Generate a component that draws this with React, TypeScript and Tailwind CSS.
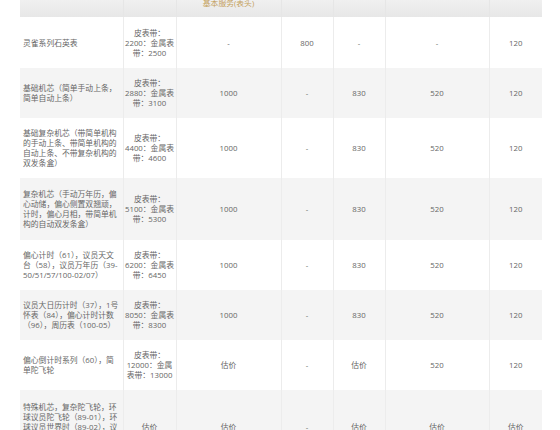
const 列宽 = [103, 53, 105, 52, 52, 104, 53]

interface 行 {
  名称: string[]
  表带: string[]
  值: string[]
  高: string
}

const 数据: 行[] = [
  {
    名称: ['灵雀系列石英表'],
    表带: ['皮表带：', '2200：金属表', '带：2500'],
    值: ['-', '800', '-', '-', '120'],
    高: 'h-[51px]',
  },
  {
    名称: ['基础机芯（简单手动上条，', '简单自动上条）'],
    表带: ['皮表带：', '2880：金属表', '带：3100'],
    值: ['1000', '-', '830', '520', '120'],
    高: 'h-[50px]',
  },
  {
    名称: ['基础复杂机芯（带简单机构', '的手动上条、带简单机构的', '自动上条、不带复杂机构的', '双发条盒）'],
    表带: ['皮表带：', '4400：金属表', '带：4600'],
    值: ['1000', '-', '830', '520', '120'],
    高: 'h-[60px]',
  },
  {
    名称: ['复杂机芯（手动万年历，偏', '心动储，偏心侧置双翘顽，', '计时，偏心月相，带简单机', '构的自动双发条盒）'],
    表带: ['皮表带：', '5100：金属表', '带：5300'],
    值: ['1000', '-', '830', '520', '120'],
    高: 'h-[62px]',
  },
  {
    名称: ['偏心计时（61），议员天文', '台（58），议员万年历（39-', '50/51/57/100-02/07）'],
    表带: ['皮表带：', '6200：金属表', '带：6450'],
    值: ['1000', '-', '830', '520', '120'],
    高: 'h-[50px]',
  },
  {
    名称: ['议员大日历计时（37），1号', '怀表（84），偏心计时计数', '（96），周历表（100-05）'],
    表带: ['皮表带：', '8050：金属表', '带：8300'],
    值: ['1000', '-', '830', '520', '120'],
    高: 'h-[50px]',
  },
  {
    名称: ['偏心倒计时系列（60），简', '单陀飞轮'],
    表带: ['皮表带：', '12000：金属', '表带：13000'],
    值: ['估价', '-', '估价', '520', '120'],
    高: 'h-[50px]',
  },
  {
    名称: ['特殊机芯，复杂陀飞轮，环', '球议员陀飞轮（89-01），环', '球议员世界时（89-02），议', '员万年历陀飞轮（94-11），', '议员三问报时'],
    表带: ['估价'],
    值: ['估价', '-', '估价', '估价', '估价'],
    高: 'h-[74px]',
  },
]

export default function App() {
  return (
    <div className="h-[430px] w-[560px] overflow-hidden bg-white pl-[20px] font-['Open_Sans','Noto_Sans_CJK_SC',sans-serif] text-[7.8px] leading-[10px] text-[#666]">
      <table className="-mt-[11px] w-[522px] table-fixed border-collapse">
        <colgroup>
          {列宽.map((w, i) => (
            <col key={i} style={{ width: w }} />
          ))}
        </colgroup>
        <thead>
          <tr className="h-[28px] bg-gradient-to-b from-[#f6f6f6] to-[#e7e7e7]">
            <th className="border-r border-[#e6e6e6]"></th>
            <th className="border-r border-[#e6e6e6]"></th>
            <th className="border-r border-[#e6e6e6] text-center font-normal text-[#c4a15c]">
              基本服务(表头)
            </th>
            <th className="border-r border-[#e6e6e6]"></th>
            <th className="border-r border-[#e6e6e6]"></th>
            <th className="border-r border-[#e6e6e6]"></th>
            <th></th>
          </tr>
        </thead>
        <tbody>
          {数据.map((r, i) => (
            <tr key={i} className={i % 2 === 1 ? 'bg-[#f4f4f4]' : 'bg-white'}>
              <td className={`${r.高} border-r border-[#ececec] pl-[3px] pr-0 align-middle`}>
                {r.名称.map((l, j) => (
                  <div key={j} className="whitespace-nowrap">
                    {l}
                  </div>
                ))}
              </td>
              <td className="border-r border-[#ececec] text-center align-middle">
                {r.表带.map((l, j) => (
                  <div key={j} className="whitespace-nowrap">
                    {l}
                  </div>
                ))}
              </td>
              {r.值.map((v, j) => (
                <td
                  key={j}
                  className={`text-center align-middle ${j < 4 ? 'border-r border-[#ececec]' : ''}`}
                >
                  {v}
                </td>
              ))}
            </tr>
          ))}
        </tbody>
      </table>
    </div>
  )
}
